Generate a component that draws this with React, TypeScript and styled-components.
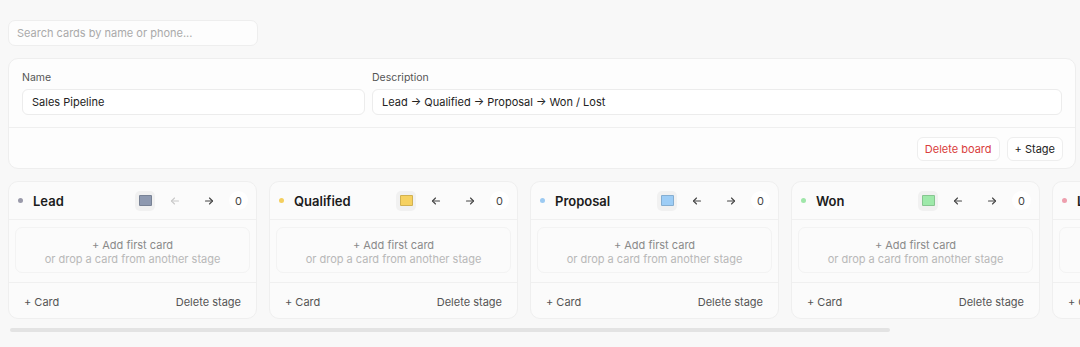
import React from "react";
import styled, { createGlobalStyle } from "styled-components";

const Global = createGlobalStyle`
  html, body { margin: 0; padding: 0; background: #f8f8f8; }
  body { font-family: Inter, "Noto Sans", sans-serif; color: #222; }
  * { box-sizing: border-box; }
`;

const Page = styled.div`
  padding: 20px 4px 0 8px;
  display: flex;
  flex-direction: column;
  gap: 12px;
`;

const Search = styled.input`
  width: 250px;
  height: 26px;
  border: 1px solid #eeeeee;
  border-radius: 7px;
  background: #fdfdfd;
  padding: 0 8px;
  font: 11px Inter, sans-serif;
  color: #222;
  outline: none;
  &::placeholder { color: #aaaaaa; }
`;

const BoardCard = styled.div`
  background: #fdfdfd;
  border: 1px solid #eeeeee;
  border-radius: 10px;
`;

const Fields = styled.div`
  display: grid;
  grid-template-columns: 343px 1fr;
  gap: 7px;
  padding: 12px 13px 12px 13px;
  border-bottom: 1px solid #efefef;
`;

const Field = styled.label`
  display: flex;
  flex-direction: column;
  gap: 4px;
`;

const Label = styled.span`
  font-size: 10.5px;
  line-height: 14px;
  color: #555;
`;

const TextInput = styled.input`
  height: 26px;
  border: 1px solid #ececec;
  border-radius: 6px;
  background: #fff;
  padding: 0 9px;
  font: 11px Inter, sans-serif;
  color: #222;
  outline: none;
`;

const BoardActions = styled.div`
  display: flex;
  justify-content: flex-end;
  gap: 7px;
  padding: 9px 12px 7px;
`;

const Button = styled.button<{ $danger?: boolean }>`
  height: 24px;
  padding: 0 7px;
  border: 1px solid #eeeeee;
  border-radius: 6px;
  background: #fff;
  font: 11px Inter, sans-serif;
  color: ${(p) => (p.$danger ? "#d9403d" : "#222")};
  cursor: pointer;
`;

const Scroller = styled.div`
  overflow: hidden;
  margin-right: -4px;
`;

const Columns = styled.div`
  display: flex;
  gap: 12px;
  width: max-content;
  padding-right: 4px;
`;

const ScrollBar = styled.div`
  height: 4px;
  margin-top: 9px;
  padding-left: 2px;
`;

const ScrollThumb = styled.div<{ $w: number }>`
  width: ${(p) => p.$w}px;
  height: 4px;
  border-radius: 3px;
  background: #e3e3e3;
`;

const Column = styled.div`
  width: 249px;
  flex: none;
  background: #fbfbfb;
  border: 1px solid #efefef;
  border-radius: 10px;
  display: flex;
  flex-direction: column;
`;

const ColHeader = styled.div`
  height: 38px;
  display: flex;
  align-items: center;
  padding: 0 8px 0 9px;
  border-bottom: 1px solid #f0f0f0;
  gap: 6px;
`;

const Dot = styled.span<{ $c: string }>`
  width: 5px;
  height: 5px;
  border-radius: 50%;
  background: ${(p) => p.$c};
  margin-right: 4px;
  flex: none;
`;

const Title = styled.span`
  font-size: 13px;
  font-weight: 600;
  color: #1c1c1c;
  flex: 1;
`;

const Swatch = styled.span`
  width: 20px;
  height: 20px;
  border-radius: 5px;
  background: #f1f1f1;
  display: flex;
  align-items: center;
  justify-content: center;
  flex: none;
`;

const SwatchFill = styled.span<{ $c: string }>`
  width: 13px;
  height: 11px;
  background: ${(p) => p.$c};
  border: 1px solid rgba(0, 0, 0, 0.15);
  border-radius: 1px;
`;

const Arrow = styled.button<{ $off?: boolean }>`
  width: 28px;
  height: 20px;
  border: none;
  background: transparent;
  padding: 0;
  display: flex;
  align-items: center;
  justify-content: center;
  color: ${(p) => (p.$off ? "#c8c8c8" : "#444")};
  flex: none;
`;

const Count = styled.span`
  width: 19px;
  height: 19px;
  border-radius: 50%;
  background: #fff;
  display: flex;
  align-items: center;
  justify-content: center;
  font-size: 11px;
  color: #444;
  flex: none;
`;

const Body = styled.div`
  padding: 7px 6px 9px 6px;
  border-bottom: 1px solid #f0f0f0;
`;

const Empty = styled.div`
  height: 46px;
  border: 1px solid #f3f3f3;
  border-radius: 7px;
  display: flex;
  flex-direction: column;
  align-items: center;
  padding-top: 10px;
  font-size: 11px;
  line-height: 14px;
`;

const EmptyMain = styled.span`
  color: #8a8a8a;
`;

const EmptySub = styled.span`
  color: #b8b8b8;
`;

const ColFooter = styled.div`
  height: 35px;
  display: flex;
  align-items: center;
  justify-content: space-between;
  padding: 2px 15px 0 15px;
`;

const FooterBtn = styled.button`
  border: none;
  background: transparent;
  padding: 0;
  font: 11px Inter, sans-serif;
  color: #555;
  cursor: pointer;
`;

const ArrowIcon = ({ dir }: { dir: "left" | "right" }) => (
  <svg width="10" height="10" viewBox="0 0 10 10" fill="none" stroke="currentColor" strokeWidth="1.1" strokeLinecap="round" strokeLinejoin="round">
    {dir === "right" ? (
      <>
        <path d="M1.5 5h7" />
        <path d="M5.5 2l3 3-3 3" />
      </>
    ) : (
      <>
        <path d="M8.5 5h-7" />
        <path d="M4.5 2l-3 3 3 3" />
      </>
    )}
  </svg>
);

const stages = [
  { name: "Lead", color: "#8e99b0", dot: "#9a9aaa" },
  { name: "Qualified", color: "#f6d160", dot: "#f4cf5e" },
  { name: "Proposal", color: "#9dcdf6", dot: "#9ccaf2" },
  { name: "Won", color: "#9ee9aa", dot: "#9fe6a9" },
  { name: "Lost", color: "#f4a5b5", dot: "#ee9fae" },
];

export default function App() {
  return (
    <>
      <Global />
      <Page>
        <Search placeholder="Search cards by name or phone..." />
        <BoardCard>
          <Fields>
            <Field>
              <Label>Name</Label>
              <TextInput defaultValue="Sales Pipeline" />
            </Field>
            <Field>
              <Label>Description</Label>
              <TextInput defaultValue="Lead → Qualified → Proposal → Won / Lost" />
            </Field>
          </Fields>
          <BoardActions>
            <Button $danger>Delete board</Button>
            <Button>+ Stage</Button>
          </BoardActions>
        </BoardCard>
        <div>
          <Scroller>
            <Columns>
              {stages.map((s, i) => (
                <Column key={s.name}>
                  <ColHeader>
                    <Dot $c={s.dot} />
                    <Title>{s.name}</Title>
                    <Swatch>
                      <SwatchFill $c={s.color} />
                    </Swatch>
                    <Arrow $off={i === 0}>
                      <ArrowIcon dir="left" />
                    </Arrow>
                    <Arrow $off={i === stages.length - 1}>
                      <ArrowIcon dir="right" />
                    </Arrow>
                    <Count>0</Count>
                  </ColHeader>
                  <Body>
                    <Empty>
                      <EmptyMain>+ Add first card</EmptyMain>
                      <EmptySub>or drop a card from another stage</EmptySub>
                    </Empty>
                  </Body>
                  <ColFooter>
                    <FooterBtn>+ Card</FooterBtn>
                    <FooterBtn>Delete stage</FooterBtn>
                  </ColFooter>
                </Column>
              ))}
            </Columns>
          </Scroller>
          <ScrollBar>
            <ScrollThumb $w={880} />
          </ScrollBar>
        </div>
      </Page>
    </>
  );
}
